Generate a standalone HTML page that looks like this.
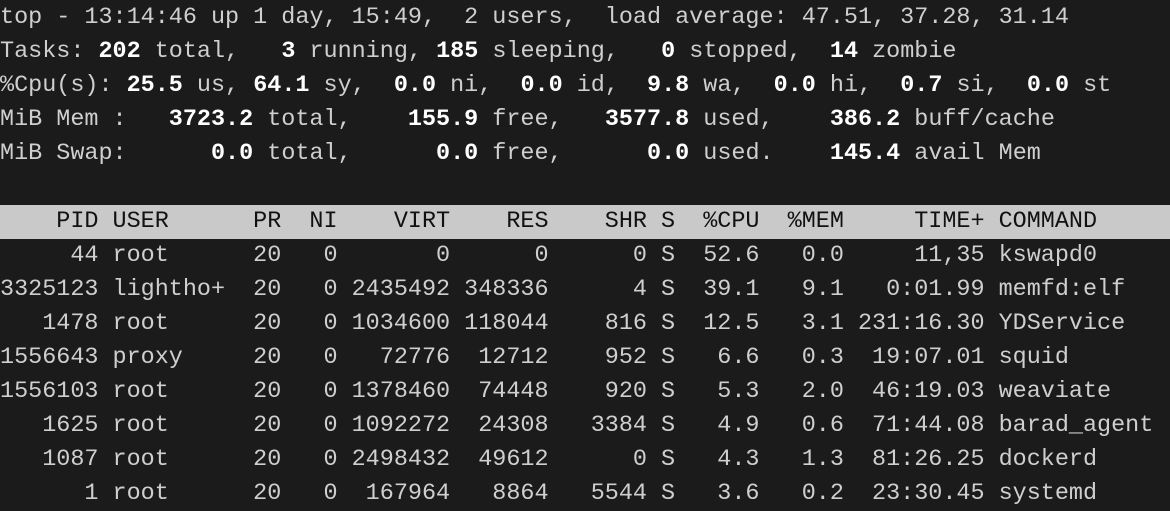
<!DOCTYPE html>
<html><head><meta charset="utf-8"><style>
html,body{margin:0;padding:0;background:#1b1b1b;width:1170px;height:498px;overflow:hidden}
pre{margin:0;position:absolute;left:0;top:1px;font-family:"Liberation Mono",monospace;font-size:23.45px;line-height:34px;color:#cfcfcf;white-space:pre}
b{color:#fff;font-weight:bold}
.h{display:inline-block;background:#c9c9c9;color:#111;width:1170px}
</style></head><body>
<pre>top - 13:14:46 up 1 day, 15:49,  2 users,  load average: 47.51, 37.28, 31.14
Tasks: <b>202</b> total,   <b>3</b> running, <b>185</b> sleeping,   <b>0</b> stopped,  <b>14</b> zombie
%Cpu(s): <b>25.5</b> us, <b>64.1</b> sy,  <b>0.0</b> ni,  <b>0.0</b> id,  <b>9.8</b> wa,  <b>0.0</b> hi,  <b>0.7</b> si,  <b>0.0</b> st
MiB Mem :   <b>3723.2</b> total,    <b>155.9</b> free,   <b>3577.8</b> used,    <b>386.2</b> buff/cache
MiB Swap:      <b>0.0</b> total,      <b>0.0</b> free,      <b>0.0</b> used.    <b>145.4</b> avail Mem

<span class="h">    PID USER      PR  NI    VIRT    RES    SHR S  %CPU  %MEM     TIME+ COMMAND</span>
     44 root      20   0       0      0      0 S  52.6   0.0     11,35 kswapd0
3325123 lightho+  20   0 2435492 348336      4 S  39.1   9.1   0:01.99 memfd:elf
   1478 root      20   0 1034600 118044    816 S  12.5   3.1 231:16.30 YDService
1556643 proxy     20   0   72776  12712    952 S   6.6   0.3  19:07.01 squid
1556103 root      20   0 1378460  74448    920 S   5.3   2.0  46:19.03 weaviate
   1625 root      20   0 1092272  24308   3384 S   4.9   0.6  71:44.08 barad_agent
   1087 root      20   0 2498432  49612      0 S   4.3   1.3  81:26.25 dockerd
      1 root      20   0  167964   8864   5544 S   3.6   0.2  23:30.45 systemd</pre>
</body></html>
